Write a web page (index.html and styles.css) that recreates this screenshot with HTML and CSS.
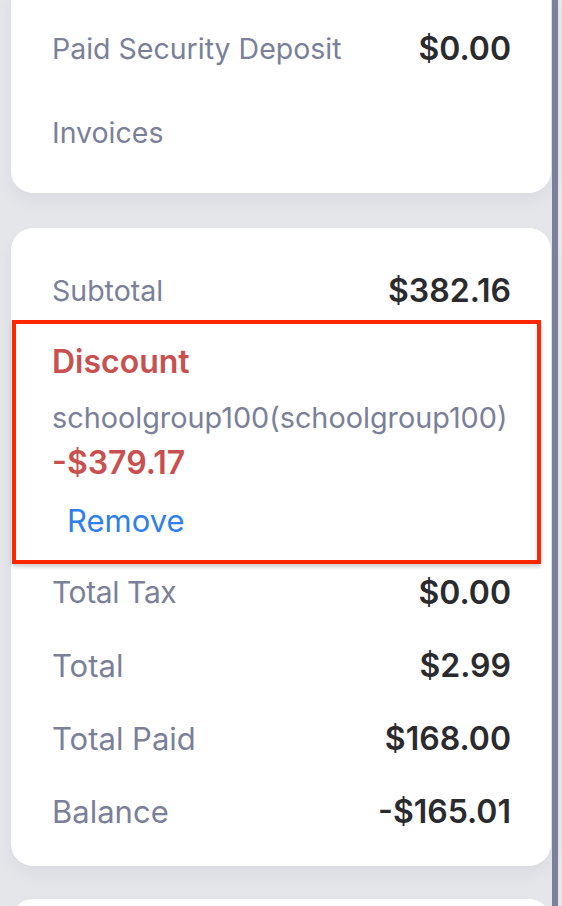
FILE: index.html
```html
<!DOCTYPE html>
<html>

<head>
  <title>Order Summary</title>
  <link rel="stylesheet" href="styles.css">
</head>

<body>
  <div class="page">
    <div class="content">
      <div class="card card-top">
        <div class="row">
          <span class="label">Paid Security Deposit</span>
          <span class="value">$0.00</span>
        </div>
        <div class="row row-invoices">
          <span class="label">Invoices</span>
        </div>
      </div>

      <div class="card card-summary">
        <div class="row">
          <span class="label">Subtotal</span>
          <span class="value">$382.16</span>
        </div>

        <!-- Bloque de descuento marcado -->
        <div class="discount">
          <div class="discount-title">Discount</div>
          <div class="discount-code">schoolgroup100(schoolgroup100)</div>
          <div class="discount-amount">-$379.17</div>
          <a class="discount-remove" href="#">Remove</a>
        </div>

        <div class="totals">
          <div class="row">
            <span class="label label-tax">Total Tax</span>
            <span class="value">$0.00</span>
          </div>
          <div class="row">
            <span class="label">Total</span>
            <span class="value">$2.99</span>
          </div>
          <div class="row">
            <span class="label">Total Paid</span>
            <span class="value">$168.00</span>
          </div>
          <div class="row">
            <span class="label">Balance</span>
            <span class="value">-$165.01</span>
          </div>
        </div>
      </div>

      <div class="card card-next"></div>
    </div>
    <div class="scrollbar"></div>
  </div>
</body>

</html>
```

FILE: styles.css
```css
body {
  margin: 0;
  background-color: #e5e6ea;
  font-family: Inter, "Noto Sans", sans-serif;
  overflow: hidden;
}

/* Estructura general */
.page {
  display: flex;
  height: 906px;
  overflow: hidden;
}

.content {
  flex: 1;
  padding: 0 1px 0 11px;
}

.scrollbar {
  width: 6px;
  margin-right: 4px;
  background-color: #7b819c;
}

/* Tarjetas */
.card {
  background-color: #ffffff;
  border-radius: 22px;
  box-shadow: 0 8px 16px rgba(40, 44, 60, 0.05);
  padding: 0 40px 0 41px;
}

.card-top {
  margin-top: -20px;
  padding-top: 50px;
  padding-bottom: 43px;
}

.card-summary {
  margin-top: 35px;
  padding-top: 44px;
  padding-bottom: 37px;
}

.card-next {
  margin-top: 33px;
  height: 120px;
}

/* Filas */
.row {
  display: flex;
  justify-content: space-between;
  align-items: center;
  height: 36px;
}

.row-invoices {
  margin-top: 48px;
}

.label {
  font-size: 28.5px;
  color: #7b8099;
}

.value {
  font-size: 32px;
  font-weight: 600;
  color: #2b2b2e;
}

/* Descuento */
.discount {
  margin: 12px -30px 10px -40px;
  padding: 20px 0 23px 36px;
  border: 4px solid #ff2600;
  box-shadow: 0 3px 4px rgba(0, 0, 0, 0.18);
}

.discount-title {
  font-size: 32px;
  font-weight: 600;
  color: #c8514f;
  line-height: 36px;
}

.discount-code {
  margin-top: 22px;
  font-size: 28.8px;
  color: #7b8099;
  line-height: 32px;
}

.discount-amount {
  margin-top: 13px;
  font-size: 32px;
  font-weight: 600;
  color: #c8514f;
  line-height: 32px;
}

.discount-remove {
  display: inline-block;
  margin: 26px 0 0 15px;
  font-size: 31px;
  color: #2f80ed;
  line-height: 32px;
  text-decoration: none;
}

/* Totales */
.totals {
  display: flex;
  flex-direction: column;
  gap: 37px;
}

.totals .label {
  font-size: 31px;
}

.totals .label-tax {
  font-size: 30px;
  letter-spacing: -0.4px;
}
```
